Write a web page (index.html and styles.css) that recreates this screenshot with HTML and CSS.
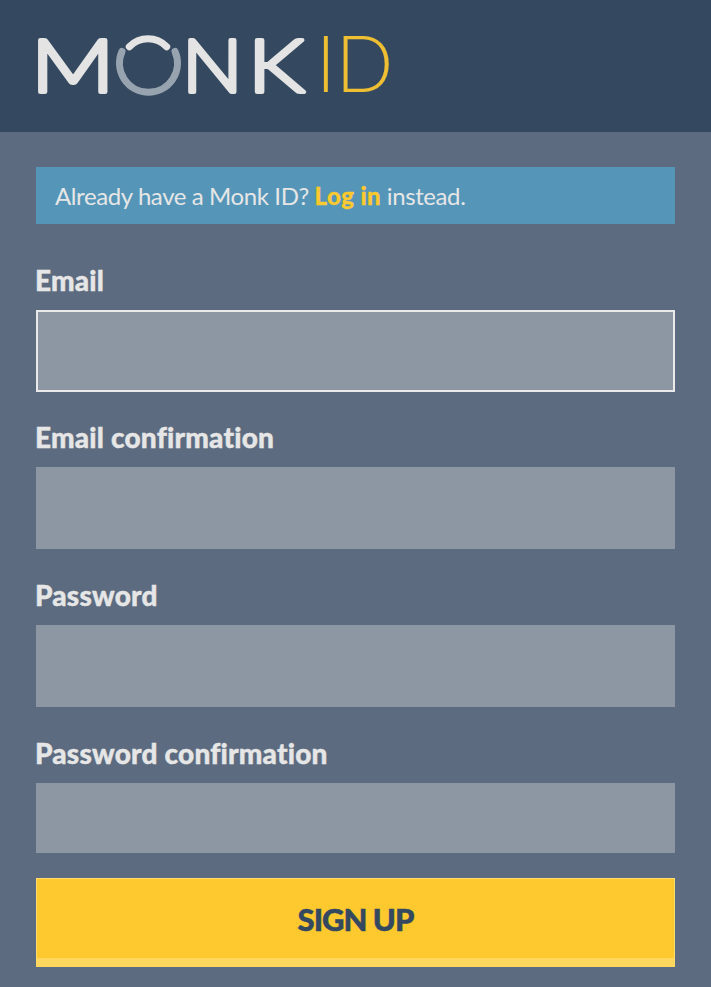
FILE: index.html
```html
<!DOCTYPE html>
<html lang="en">
<head>
  <meta charset="UTF-8" />
  <title>Monk ID - Sign up</title>
  <link rel="stylesheet" href="styles.css">
</head>
<body>
  <header class="site-header">
    <svg class="logo" width="360" height="66" viewBox="0 0 360 66" role="img" aria-label="Monk ID">
      <text class="logo-letter" transform="translate(-5 58) scale(1.26 1)">M</text>
      <path class="ring" d="M86 17.5 A29 29 0 1 0 139 17.5" />
      <path class="ring-top" d="M93.3 12.7 A26 26 0 0 1 130.7 12.7" />
      <text class="logo-letter" transform="translate(146 58) scale(1.1 1)">N</text>
      <text class="logo-letter" transform="translate(212 58) scale(1.22 1)">K</text>
      <text class="logo-id" transform="translate(280 58) scale(.97 1)">ID</text>
    </svg>
  </header>

  <main class="content">
    <p class="notice">Already have a Monk ID? <a href="#">Log in</a> instead.</p>

    <form class="signup-form">
      <div class="field">
        <label for="email">Email</label>
        <input id="email" class="is-focused" type="email" />
      </div>
      <div class="field">
        <label for="email_confirmation">Email confirmation</label>
        <input id="email_confirmation" type="email" />
      </div>
      <div class="field">
        <label for="password">Password</label>
        <input id="password" type="password" />
      </div>
      <div class="field">
        <label for="password_confirmation">Password confirmation</label>
        <input id="password_confirmation" class="short" type="password" />
      </div>
      <button type="button">SIGN UP</button>
    </form>
  </main>
</body>
</html>
```

FILE: styles.css
```css
body {
  font-family: 'Lato', 'Open Sans', sans-serif;
  background: #5c6b7f;
  color: #e6e6e6;
  margin: 0;
  padding: 0;
}
.site-header {
  background: #34495f;
  height: 132px;
  padding: 34px 0 0 36px;
  box-sizing: border-box;
}
.logo {
  display: block;
  overflow: visible;
}
.logo-letter {
  font-family: 'Lato', sans-serif;
  font-size: 73px;
  font-weight: 300;
  fill: #e4e4e4;
  stroke: #e4e4e4;
  stroke-width: 4px;
  stroke-linejoin: round;
}
.logo-id {
  font-family: 'Lato', sans-serif;
  font-size: 78px;
  font-weight: 300;
  fill: #eebf33;
}
.ring {
  fill: none;
  stroke: #98a3b0;
  stroke-width: 7;
  stroke-linecap: round;
}
.ring-top {
  fill: none;
  stroke: #e4e4e4;
  stroke-width: 7;
  stroke-linecap: round;
}
.content {
  padding: 35px 36px 0;
}
.notice {
  background: #5495b8;
  margin: 0 0 38px;
  height: 57px;
  line-height: 57px;
  padding: 0 19px;
  font-size: 24px;
  letter-spacing: -0.4px;
}
.notice a {
  color: #fdc92f;
  font-weight: 900;
  letter-spacing: 0.4px;
  -webkit-text-stroke: 0.3px #fdc92f;
  text-decoration: none;
}
.field {
  margin-bottom: 28px;
}
.field:first-child {
  margin-bottom: 27px;
}
.field:nth-child(4) {
  margin-bottom: 25px;
}
label {
  display: block;
  font-size: 28px;
  font-weight: 900;
  line-height: 36px;
  margin-bottom: 12px;
  margin-left: -1px;
  letter-spacing: 0.2px;
  -webkit-text-stroke: 0.4px #e6e6e6;
}
input {
  display: block;
  width: 100%;
  height: 82px;
  box-sizing: border-box;
  background: #8c97a3;
  border: none;
  border-radius: 0;
  padding: 0 16px;
}
input.is-focused {
  border: 2px solid #eaeaea;
}
input.short {
  height: 70px;
}
button {
  display: block;
  width: 100%;
  height: 89px;
  background: #fdc92f;
  border: 1px solid #ffdc6e;
  border-bottom: 9px solid #ffd65e;
  border-radius: 0;
  color: #34495f;
  font-family: 'Lato', sans-serif;
  font-size: 31px;
  font-weight: 900;
  letter-spacing: -1px;
  -webkit-text-stroke: 0.5px #34495f;
}
```
